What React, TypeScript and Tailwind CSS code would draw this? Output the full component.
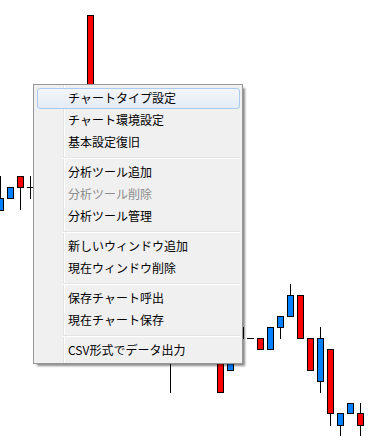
import React from 'react';

const RED = '#ff0000';
const BLUE = '#0080ff';

type Candle = { c: number; top: number; bot: number; hi?: number; lo?: number; color: string };

// candle bodies (pixel coords of border lines), wicks from hi/lo
const candles: Candle[] = [
  { c: 0, top: 198, bot: 210, hi: 176, color: BLUE },
  { c: 10, top: 187, bot: 198, color: BLUE },
  { c: 20, top: 176, bot: 187, lo: 209, color: RED },
  { c: 90, top: 15, bot: 120, color: RED },
  { c: 220, top: 300, bot: 392, color: RED },
  { c: 230, top: 330, bot: 370, color: BLUE },
  { c: 240, top: 327, bot: 338, color: RED },
  { c: 260, top: 338, bot: 349, color: RED },
  { c: 270, top: 327, bot: 349, color: BLUE },
  { c: 280, top: 316, bot: 327, lo: 338, color: BLUE },
  { c: 290, top: 295, bot: 316, hi: 284, color: BLUE },
  { c: 300, top: 295, bot: 338, color: RED },
  { c: 310, top: 338, bot: 370, color: RED },
  { c: 320, top: 338, bot: 381, hi: 327, lo: 392, color: BLUE },
  { c: 330, top: 349, bot: 413, lo: 425, color: RED },
  { c: 340, top: 413, bot: 425, lo: 440, color: BLUE },
  { c: 350, top: 403, bot: 413, color: BLUE },
  { c: 360, top: 413, bot: 425, hi: 403, lo: 440, color: RED },
];

const Chart: React.FC = () => (
  <svg width={370} height={436} className="absolute left-0 top-0" shapeRendering="crispEdges">
    {/* doji & stray wicks */}
    <line x1={30.5} y1={176} x2={30.5} y2={199} stroke="#000" />
    <line x1={27} y1={187.5} x2={34} y2={187.5} stroke="#000" />
    <line x1={170.5} y1={360} x2={170.5} y2={393} stroke="#000" />
    <line x1={247} y1={338.5} x2={254} y2={338.5} stroke="#000" />
    {candles.map((k, i) => (
      <g key={i}>
        {k.hi !== undefined && (
          <line x1={k.c + 0.5} y1={k.hi} x2={k.c + 0.5} y2={k.top} stroke="#000" />
        )}
        {k.lo !== undefined && (
          <line x1={k.c + 0.5} y1={k.bot} x2={k.c + 0.5} y2={k.lo + 1} stroke="#000" />
        )}
        <rect
          x={k.c - 3 + 0.5}
          y={k.top + 0.5}
          width={6}
          height={k.bot - k.top}
          fill={k.color}
          stroke="#000"
        />
      </g>
    ))}
  </svg>
);

type Entry = { label: string; disabled?: boolean; active?: boolean } | 'sep';

const entries: Entry[] = [
  { label: 'チャートタイプ設定', active: true },
  { label: 'チャート環境設定' },
  { label: '基本設定復旧' },
  'sep',
  { label: '分析ツール追加' },
  { label: '分析ツール削除', disabled: true },
  { label: '分析ツール管理' },
  'sep',
  { label: '新しいウィンドウ追加' },
  { label: '現在ウィンドウ削除' },
  'sep',
  { label: '保存チャート呼出' },
  { label: '現在チャート保存' },
  'sep',
  { label: 'CSV形式でデータ出力' },
];

const ContextMenu: React.FC = () => (
  <div className="absolute left-[33px] top-[84px] flex w-[210px] flex-col border border-[#979797] bg-[#f0f0f0] py-[2px] pl-[3px] pr-[2px] shadow-[3px_3px_2px_-1px_rgba(0,0,0,0.45)]">
    {/* icon gutter */}
    <div className="absolute left-[29px] top-0 bottom-0 w-[2px] border-l border-l-[#e2e3e3] border-r border-r-white" />
    {entries.map((e, i) =>
      e === 'sep' ? (
        <div key={i} className="flex h-[8px] items-center pl-[26px]">
          <div className="h-[2px] w-full translate-y-[1px] border-t border-t-[#e2e3e3] border-b border-b-white" />
        </div>
      ) : (
        <div
          key={i}
          className={`relative flex h-[22px] items-center pl-[31px] text-[12px] leading-none ${
            e.disabled ? 'text-[#8d8d8d]' : 'text-black'
          }`}
        >
          {e.active && (
            <div className="absolute inset-x-0 top-[1px] bottom-0 rounded-[3px] border border-[#a9cbf1] bg-gradient-to-b from-[#f3f5f8] to-[#e5ecf6]" />
          )}
          <span className="relative">{e.label}</span>
        </div>
      )
    )}
  </div>
);

export default function App() {
  return (
    <div className="relative h-[436px] w-[370px] overflow-hidden bg-white font-['Noto_Sans_CJK_JP','Noto_Sans',sans-serif]">
      <Chart />
      <ContextMenu />
    </div>
  );
}
